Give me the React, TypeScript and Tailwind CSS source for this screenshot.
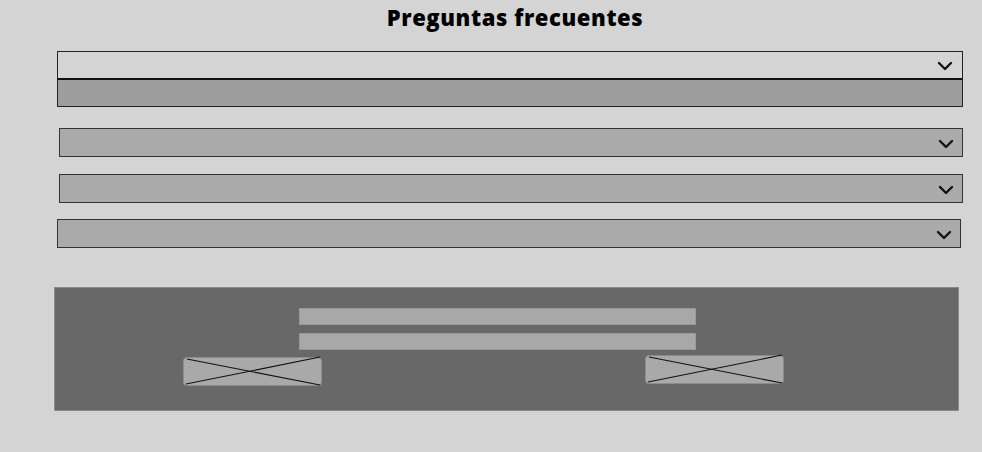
import React from 'react';
import { ChevronDown } from 'lucide-react';

const faqs = [
  { open: true, cls: 'ml-[57px] w-[906px] mt-[20px]' },
  { open: false, cls: 'ml-[59px] w-[904px] mt-[21px]' },
  { open: false, cls: 'ml-[59px] w-[904px] mt-[17px]' },
  { open: false, cls: 'ml-[57px] w-[904px] mt-[16px]' },
];

const ImagePlaceholder = ({ className }: { className: string }) => (
  <div className={`relative h-[29px] w-[139px] rounded-[4px] border border-[#8c8c8c] bg-[#a9a9a9] ${className}`}>
    <svg className="absolute inset-0 h-full w-full overflow-visible" viewBox="0 0 139 29" preserveAspectRatio="none">
      <line x1="3" y1="1" x2="138" y2="29" stroke="#111" strokeWidth="1.2" />
      <line x1="2" y1="28" x2="138" y2="-1" stroke="#111" strokeWidth="1.2" />
    </svg>
  </div>
);

export default function App() {
  return (
    <div className="min-h-[452px] w-[982px] bg-[#d4d4d4] pb-[42px] font-['Open_Sans',sans-serif]">
      <h1 className="pl-[48px] pt-[3px] text-center text-[22px] font-extrabold leading-[28px] tracking-[0.6px] text-black">
        Preguntas frecuentes
      </h1>

      {faqs.map((faq, i) =>
        faq.open ? (
          <div key={i} className={`${faq.cls} border border-[#222]`}>
            <div className="flex h-[26px] items-center justify-end bg-[#d4d4d4] pr-[5px] pt-[1px]">
              <ChevronDown className="h-6 w-6 text-[#111]" strokeWidth={2.4} />
            </div>
            <div className="h-[28px] border-t-2 border-[#111] bg-[#9d9d9d]" />
          </div>
        ) : (
          <div
            key={i}
            className={`${faq.cls} flex h-[29px] items-center justify-end border border-[#333] bg-[#aaaaaa] pr-[4px] pt-[2px]`}
          >
            <ChevronDown className="h-6 w-6 text-[#111]" strokeWidth={2.4} />
          </div>
        )
      )}

      <div className="ml-[54px] mt-[39px] h-[124px] w-[905px] border border-[#8a8a8a] bg-[#686868] pt-[20px]">
        <div className="ml-[244px] flex w-[397px] flex-col gap-[8px]">
          <div className="h-[17px] border border-[#999] bg-[#a8a8a8]" />
          <div className="h-[17px] border border-[#999] bg-[#a8a8a8]" />
        </div>
        <div className="flex items-start">
          <ImagePlaceholder className="ml-[128px] mt-[7px]" />
          <ImagePlaceholder className="ml-[323px] mt-[5px]" />
        </div>
      </div>
    </div>
  );
}
